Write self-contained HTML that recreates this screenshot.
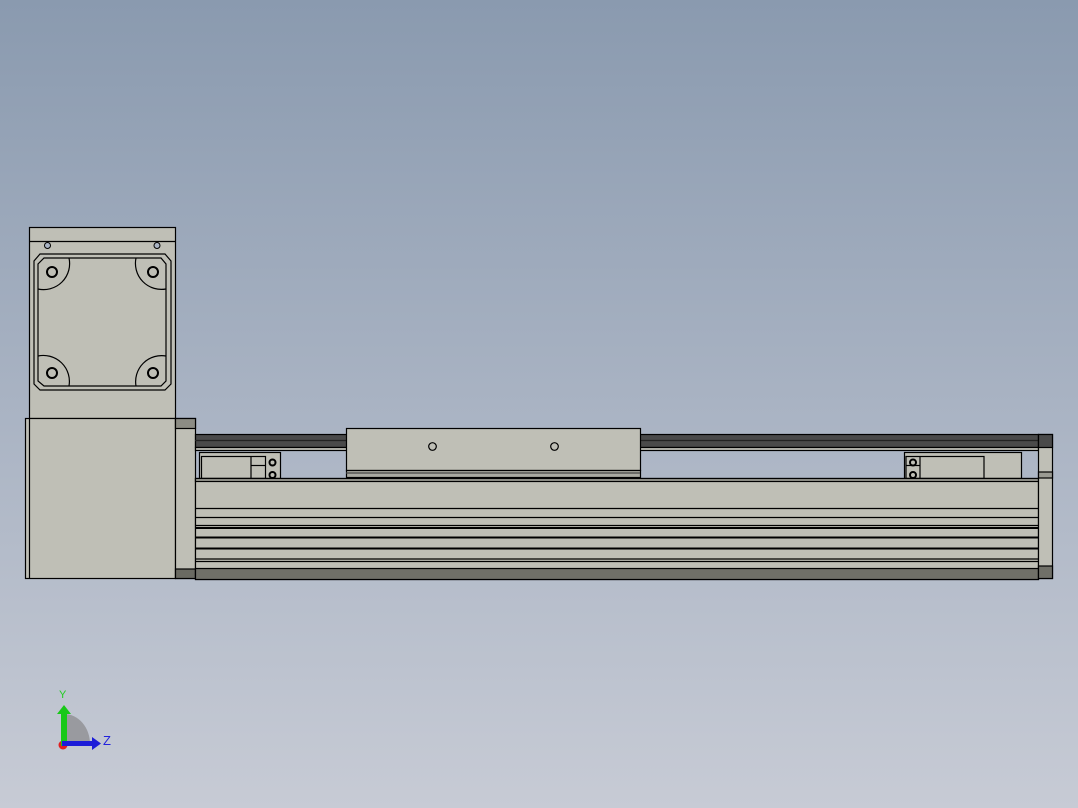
<!DOCTYPE html><html><head><style>html,body{margin:0;padding:0;overflow:hidden}body{width:1078px;height:808px;background:linear-gradient(#8a9aaf,#a9b3c3 50%,#c7cbd5)}svg{display:block}</style></head><body>
<svg width="1078" height="808" viewBox="0 0 1078 808" xmlns="http://www.w3.org/2000/svg" stroke="#000" stroke-width="1.2" fill="none">
<rect x="29.5" y="227.5" width="146" height="191" fill="#bfbfb6"/>
<line x1="29" y1="241.5" x2="175" y2="241.5"/>
<circle cx="47.5" cy="245.5" r="3" fill="#a9b3c3" stroke-width="1"/>
<circle cx="157" cy="245.5" r="3" fill="#a9b3c3" stroke-width="1"/>
<polygon points="40,254 165,254 171,261 171,384 165,390 40,390 34,384 34,261"/>
<polygon points="44,258 161,258 166,264 166,381 161,386 44,386 38,381 38,264"/>
<path d="M69,258 A26,26 0 0 1 38,289 M136,258 A26,26 0 0 0 166,289 M38,356 A26,26 0 0 1 69,386 M166,356 A26,26 0 0 0 136,386"/>
<g stroke-width="2"><circle cx="52" cy="272" r="5"/><circle cx="153" cy="272" r="5"/><circle cx="52" cy="373" r="5"/><circle cx="153" cy="373" r="5"/></g>
<rect x="25.5" y="418.5" width="150" height="160" fill="#bfbfb6"/>
<line x1="29.5" y1="418" x2="29.5" y2="578"/>
<rect x="175.5" y="418.5" width="20" height="160" fill="#bfbfb6"/>
<rect x="175.5" y="418.5" width="20" height="10" fill="#8c8c84"/>
<rect x="175.5" y="569" width="20" height="9.5" fill="#6a6a62"/>
<rect x="195.5" y="434.5" width="843" height="13" fill="#4a4a4a"/>
<line x1="195" y1="440.5" x2="1038" y2="440.5" stroke="#222"/>
<rect x="195.5" y="447.5" width="843" height="3" fill="#bcbcb4"/>
<rect x="199.5" y="452.5" width="81" height="26" fill="#bfbfb6"/>
<rect x="201.5" y="456.5" width="64" height="22"/>
<line x1="251" y1="456" x2="251" y2="478"/><line x1="251" y1="465.5" x2="265" y2="465.5"/>
<circle cx="272.5" cy="462.5" r="3" stroke-width="2"/><circle cx="272.5" cy="475" r="3" stroke-width="2"/>
<rect x="904.5" y="452.5" width="117" height="26" fill="#bfbfb6"/>
<rect x="906" y="456.5" width="78" height="22"/>
<line x1="920" y1="456" x2="920" y2="478"/><line x1="906" y1="465.5" x2="920" y2="465.5"/>
<circle cx="913" cy="462.5" r="3" stroke-width="2"/><circle cx="913" cy="475" r="3" stroke-width="2"/>
<rect x="195.5" y="478.5" width="843" height="101" fill="#bfbfb6"/>
<rect x="195.5" y="478.5" width="843" height="3" fill="#9a9a92"/>
<g><line x1="195" y1="508.5" x2="1038" y2="508.5"/><line x1="195" y1="517.5" x2="1038" y2="517.5"/><line x1="195" y1="525.5" x2="1038" y2="525.5"/><line x1="195" y1="528" x2="1038" y2="528" stroke-width="2"/><line x1="195" y1="537.5" x2="1038" y2="537.5" stroke-width="2"/><line x1="195" y1="548.5" x2="1038" y2="548.5" stroke-width="2"/><line x1="195" y1="559" x2="1038" y2="559"/><line x1="195" y1="561.5" x2="1038" y2="561.5"/></g>
<rect x="195.5" y="568.5" width="843" height="11" fill="#707068"/>
<rect x="1038.5" y="434.5" width="14" height="144" fill="#bfbfb6"/>
<rect x="1038.5" y="434.5" width="14" height="13" fill="#4a4a4a"/>
<rect x="1038.5" y="472" width="14" height="6" fill="#9a9a92"/>
<rect x="1038.5" y="566" width="14" height="12.5" fill="#707068"/>
<rect x="346.5" y="428.5" width="294" height="42" fill="#bfbfb6"/>
<rect x="346.5" y="470.5" width="294" height="7" fill="#a9a9a1"/>
<line x1="346" y1="473" x2="640" y2="473" stroke="#444"/>
<circle cx="432.5" cy="446.5" r="3.8"/><circle cx="554.5" cy="446.5" r="3.8"/>
<path d="M64,714 L64,744 L90,744 A26,30 0 0 0 64,714Z" fill="#8e8f92" stroke="none" opacity="0.8"/>
<circle cx="63" cy="745" r="4.5" fill="#e02020" stroke="none"/>
<rect x="61" y="712" width="6" height="34" fill="#18c818" stroke="none"/>
<polygon points="57,714 64,705 71,714" fill="#18c818" stroke="none"/>
<rect x="62" y="741" width="32" height="5" fill="#1c1cd8" stroke="none"/>
<polygon points="92,737 101,743.5 92,750" fill="#1c1cd8" stroke="none"/>
<text x="59" y="698" font-family="Liberation Sans, sans-serif" font-size="11" fill="#22cc22" stroke="none">Y</text>
<text x="103" y="745" font-family="Liberation Sans, sans-serif" font-size="13" fill="#2222dd" stroke="none">Z</text>
</svg>
</body></html>
